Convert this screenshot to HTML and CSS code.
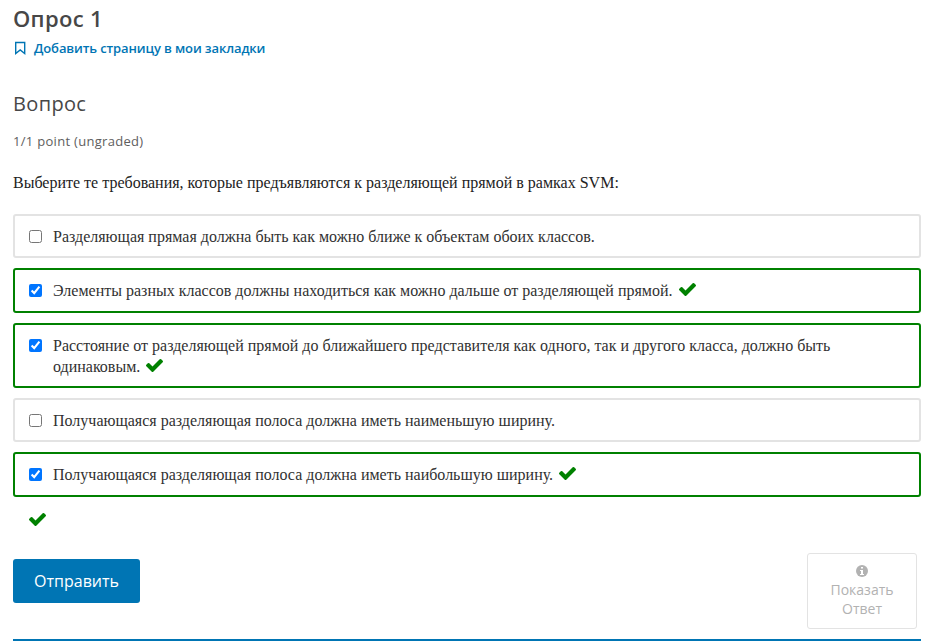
FILE: index.html
```html
<!DOCTYPE html>
<html lang="ru">
<head>
<meta charset="utf-8">
<title>Опрос 1</title>
<link rel="stylesheet" href="styles.css">
</head>
<body>
<svg width="0" height="0" class="defs"><symbol id="check" viewBox="121 334 1550 1188"><path d="M1671 566q0 40-28 68l-724 724-136 136q-28 28-68 28t-68-28l-136-136-362-362q-28-28-28-68t28-68l136-136q28-28 68-28t68 28l294 295 656-657q28-28 68-28t68 28l136 136q28 28 28 68z"/></symbol></svg>
<main>
<h1>Опрос 1</h1>
<a class="bookmark"><svg width="12" height="14" viewBox="0 0 12 14"><path d="M1.7 1.500h9v11L6.200 9l-4.500 3.500z"/></svg><span>Добавить страницу в мои закладки</span></a>
<h2>Вопрос</h2>
<div class="points">1/1 point (ungraded)</div>
<p class="question">Выберите те требования, которые предъявляются к разделяющей прямой в рамках SVM:</p>
<div class="options">
<label class="option"><input type="checkbox"><span>Разделяющая прямая должна быть как можно ближе к объектам обоих классов.</span></label>
<label class="option correct"><input type="checkbox" checked><span>Элементы разных классов должны находиться как можно дальше от разделяющей прямой. <svg class="check"><use href="#check"/></svg></span></label>
<label class="option correct"><input type="checkbox" checked><span>Расстояние от разделяющей прямой до ближайшего представителя как одного, так и другого класса, должно быть одинаковым. <svg class="check"><use href="#check"/></svg></span></label>
<label class="option"><input type="checkbox"><span>Получающаяся разделяющая полоса должна иметь наименьшую ширину.</span></label>
<label class="option correct"><input type="checkbox" checked><span>Получающаяся разделяющая полоса должна иметь наибольшую ширину. <svg class="check"><use href="#check"/></svg></span></label>
</div>
<div class="status"><svg class="check"><use href="#check"/></svg></div>
<div class="actions">
<button class="submit">Отправить</button>
<button class="answer"><svg width="12" height="12" viewBox="0 0 12 12"><circle cx="6" cy="6" r="6" fill="#b2b2b2"/><path d="M5 2h2v1.600H5zM4 5h3v4h1v1H4V9h1V6H4z" fill="#fff"/></svg><span>Показать Ответ</span></button>
</div>
</main>
</body>
</html>
```

FILE: styles.css
```css
* { box-sizing: border-box; }
body { margin: 0; background: #fff; color: #313131; font-family: "Open Sans", sans-serif; }
.defs { position: absolute; }
main { width: 908px; height: 641px; margin-left: 13px; display: flex; flex-direction: column; border-bottom: 2px solid #0075b4; overflow: hidden; }
h1 { margin: 4px 0 0; height: 30px; font: 600 22px/29px "Open Sans", sans-serif; letter-spacing: .3px; color: #474747; }
.bookmark { display: flex; align-items: center; gap: 8px; height: 28px; padding-left: 1px; color: #0075b4; font-size: 13px; font-weight: 600; letter-spacing: -.12px; }
.bookmark svg { fill: none; stroke: #0075b4; stroke-width: 1.4; }
h2 { margin: 27px 0 0; height: 30px; font: 400 20px/30px "Open Sans", sans-serif; letter-spacing: .35px; color: #474747; }
.points { margin-top: 11px; height: 22px; font-size: 13px; line-height: 22px; letter-spacing: .3px; color: #5e5e5e; }
.question { margin: 20px 0 0; height: 22px; font: 16px/22px "Liberation Serif", serif; color: #222; }
.options { display: flex; flex-direction: column; gap: 10px; margin-top: 20px; }
.option { display: flex; align-items: flex-start; min-height: 44px; padding: 10px 12px 9px 14px; border: 2px solid #e3e3e3; border-radius: 3px; font: 16px/21px "Liberation Serif", serif; }
.option.correct { border-color: #008100; min-height: 45px; }
.option input { width: 13px; height: 13px; margin: 4px 11px 0 0; flex: none; }
.option span { max-width: 800px; }
.check { width: 17px; height: 13px; margin-left: 2px; fill: #008100; vertical-align: 0; }
.status { height: 24px; padding: 5px 0 0 15px; margin-top: 11px; display: flex; align-items: flex-start; }
.status .check { margin-left: 1px; }
.actions { display: flex; justify-content: space-between; align-items: flex-start; margin-top: 21px; padding-right: 4px; }
button { font-family: "Open Sans", sans-serif; }
.submit { width: 127px; height: 44px; margin-top: 6px; border: 0; border-radius: 3px; background: #0075b4; color: #fff; font-size: 16px; }
.answer { width: 110px; height: 76px; padding: 11px 15px 0; border: 1px solid #e3e3e3; border-radius: 3px; background: #fff; color: #b2b2b2; font-size: 14px; line-height: 19px; display: flex; flex-direction: column; align-items: center; gap: 3px; }
.answer svg { flex: none; }
```
